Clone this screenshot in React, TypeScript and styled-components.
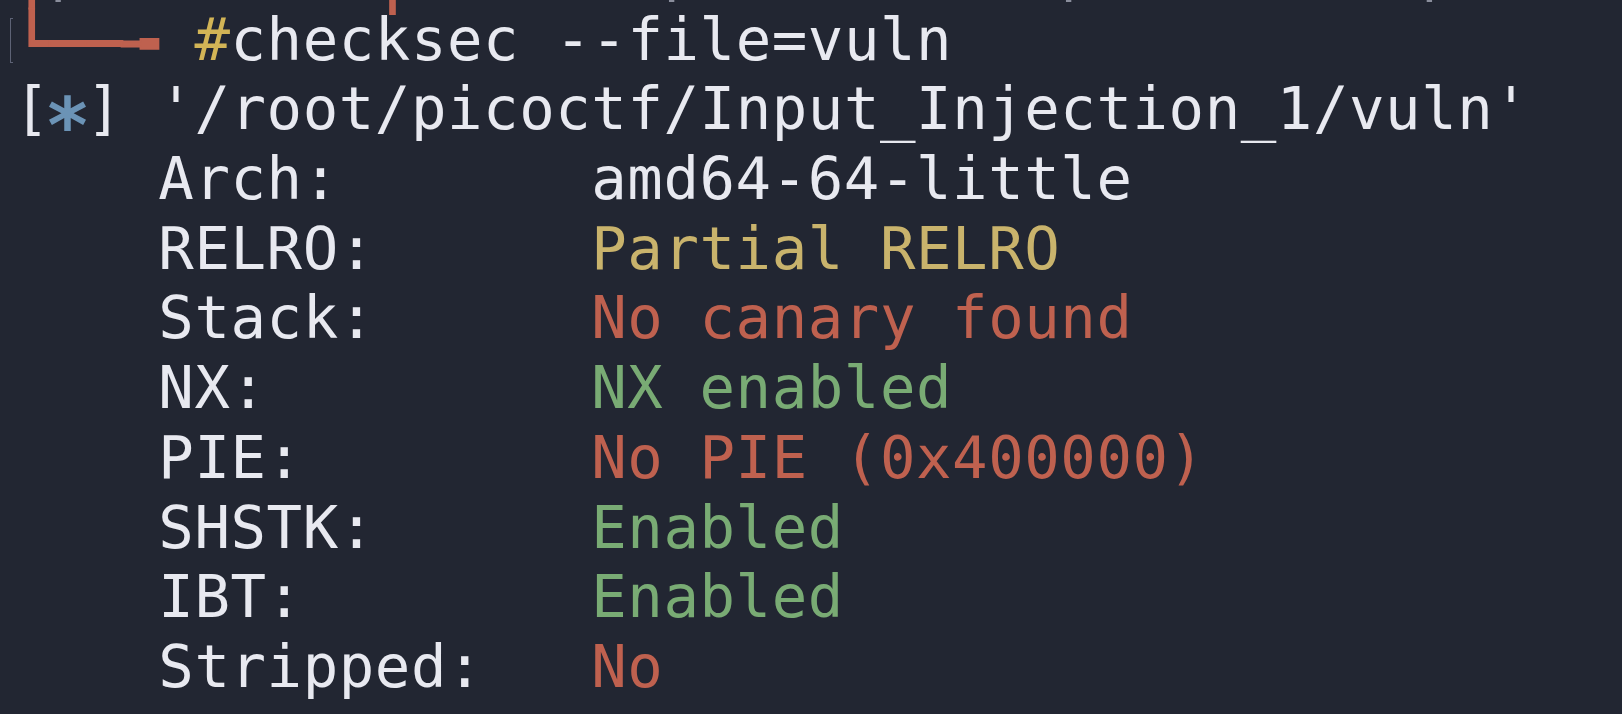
import React from "react";
import styled, { createGlobalStyle } from "styled-components";

const CELL = 36.08;
const LINE = 69.7;

type Tone = "fg" | "red" | "gold" | "yellow" | "green" | "blue" | "dim";

const palette: Record<Tone, string> = {
  fg: "#e8e9f0",
  red: "#bf614f",
  gold: "#d2b456",
  yellow: "#c9b36c",
  green: "#79ab74",
  blue: "#6b93b6",
  dim: "#8a8e9c",
};

const Global = createGlobalStyle`
  html, body {
    margin: 0;
    padding: 0;
    background: #222632;
  }
  body {
    overflow: hidden;
  }
`;

const Screen = styled.main`
  width: 1622px;
  height: 714px;
  overflow: hidden;
  box-sizing: border-box;
  padding-left: 14px;
  background: #222632;
  color: ${palette.fg};
  font-family: "DejaVu Sans Mono", "Liberation Mono", monospace;
  font-size: 59px;
  letter-spacing: 0.56px;
  line-height: ${LINE}px;
`;

const Lines = styled.div`
  display: flex;
  flex-direction: column;
  margin-top: -65px;
`;

const Line = styled.div`
  position: relative;
  height: ${LINE}px;
  white-space: pre;
`;

const Text = styled.span<{ $tone: Tone }>`
  color: ${(p) => palette[p.$tone]};
`;

/* box-drawing prompt art, thickened to the terminal's stroke weight */
const BoxArt = styled.span<{ $drop?: number }>`
  display: inline-block;
  color: ${palette.red};
  -webkit-text-stroke: 2px ${palette.red};
  transform: translateY(${(p) => p.$drop ?? 4}px);
`;

/* pwntools' status star: larger and sitting on the baseline */
const Star = styled.span`
  display: inline-block;
  color: ${palette.blue};
  font-weight: bold;
  transform: translateY(17px) scale(1.3);
`;

const CommandMark = styled.span`
  position: absolute;
  left: -4px;
  top: 13px;
  width: 2px;
  height: 43px;
  border: 1.5px solid #5d6275;
  border-right: none;
`;

const KeyRow = styled(Line)`
  display: flex;
  padding-left: ${CELL * 4}px;
`;

const Key = styled.span`
  flex: 0 0 ${CELL * 12}px;
`;

type Row = { key: string; value: string; tone: Tone };

const rows: Row[] = [
  { key: "Arch:", value: "amd64-64-little", tone: "fg" },
  { key: "RELRO:", value: "Partial RELRO", tone: "yellow" },
  { key: "Stack:", value: "No canary found", tone: "red" },
  { key: "NX:", value: "NX enabled", tone: "green" },
  { key: "PIE:", value: "No PIE (0x400000)", tone: "red" },
  { key: "SHSTK:", value: "Enabled", tone: "green" },
  { key: "IBT:", value: "Enabled", tone: "green" },
  { key: "Stripped:", value: "No", tone: "red" },
];

export default function App() {
  return (
    <>
      <Global />
      <Screen>
        <Lines>
          <Line>
            <BoxArt>┌</BoxArt>
            <Text $tone="dim">p</Text>
            {"        "}
            <BoxArt $drop={9}>│</BoxArt>
            {"       "}
            <Text $tone="dim">p</Text>
            {"          "}
            <Text $tone="dim">p</Text>
            {"         "}
            <Text $tone="dim">p</Text>
          </Line>
          <Line>
            <CommandMark />
            <BoxArt>└──╼</BoxArt>
            {" "}
            <Text $tone="gold">#</Text>
            <Text $tone="fg">checksec --file=vuln</Text>
          </Line>
          <Line>
            <Text $tone="fg">[</Text>
            <Star>*</Star>
            <Text $tone="fg">] '/root/picoctf/Input_Injection_1/vuln'</Text>
          </Line>
          {rows.map((r) => (
            <KeyRow key={r.key}>
              <Key>{r.key}</Key>
              <Text $tone={r.tone}>{r.value}</Text>
            </KeyRow>
          ))}
        </Lines>
      </Screen>
    </>
  );
}
